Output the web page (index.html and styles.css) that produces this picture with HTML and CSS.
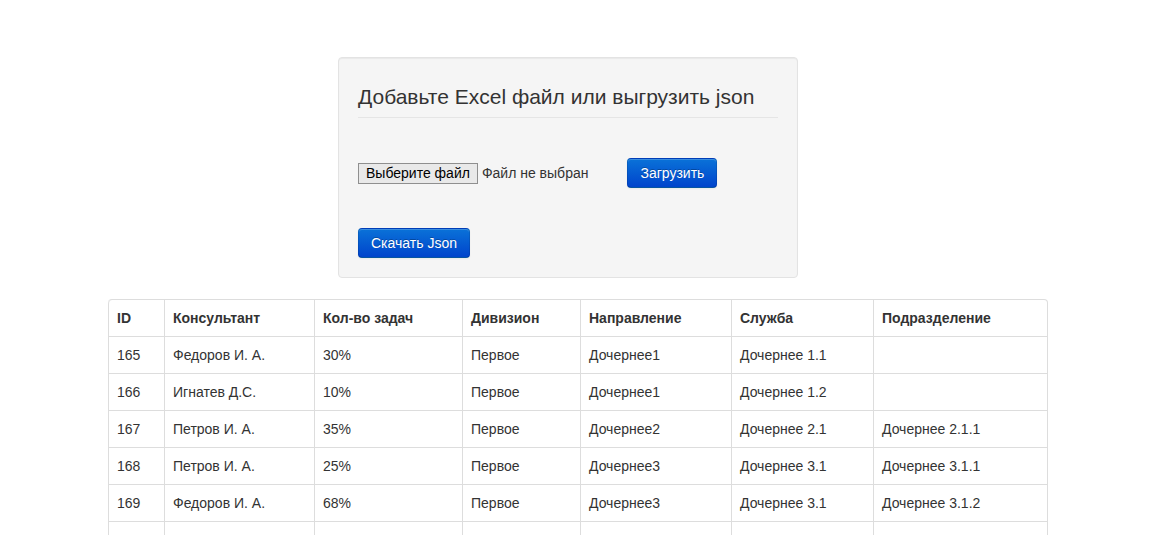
FILE: index.html
```html
<!DOCTYPE html>
<html lang="ru">
<head>
<meta charset="utf-8">
<title>Excel</title>
<link rel="stylesheet" href="styles.css">
</head>
<body>
<div class="page">
  <div class="well">
    <div class="legend">Добавьте Excel файл или выгрузить json</div>
    <div class="upload-row">
      <span class="file-btn">Выберите файл</span>
      <span class="file-name">Файл не выбран</span>
      <button class="btn btn-primary upload">Загрузить</button>
    </div>
    <div class="download-row">
      <button class="btn btn-primary">Скачать Json</button>
    </div>
  </div>

  <table class="table">
    <colgroup>
      <col class="c1"><col class="c2"><col class="c3"><col class="c4"><col class="c5"><col class="c6"><col class="c7">
    </colgroup>
    <thead>
      <tr><th>ID</th><th>Консультант</th><th>Кол-во задач</th><th>Дивизион</th><th>Направление</th><th>Служба</th><th>Подразделение</th></tr>
    </thead>
    <tbody>
      <tr><td>165</td><td>Федоров И. А.</td><td>30%</td><td>Первое</td><td>Дочернее1</td><td>Дочернее 1.1</td><td></td></tr>
      <tr><td>166</td><td>Игнатев Д.С.</td><td>10%</td><td>Первое</td><td>Дочернее1</td><td>Дочернее 1.2</td><td></td></tr>
      <tr><td>167</td><td>Петров И. А.</td><td>35%</td><td>Первое</td><td>Дочернее2</td><td>Дочернее 2.1</td><td>Дочернее 2.1.1</td></tr>
      <tr><td>168</td><td>Петров И. А.</td><td>25%</td><td>Первое</td><td>Дочернее3</td><td>Дочернее 3.1</td><td>Дочернее 3.1.1</td></tr>
      <tr><td>169</td><td>Федоров И. А.</td><td>68%</td><td>Первое</td><td>Дочернее3</td><td>Дочернее 3.1</td><td>Дочернее 3.1.2</td></tr>
      <tr><td>&nbsp;</td><td>&nbsp;</td><td>&nbsp;</td><td>&nbsp;</td><td>&nbsp;</td><td>&nbsp;</td><td>&nbsp;</td></tr>
    </tbody>
  </table>
</div>
</body>
</html>
```
FILE: styles.css
```css
html, body {
  margin: 0;
  padding: 0;
  background: #ffffff;
}
body {
  font-family: "Liberation Sans", Arial, Helvetica, sans-serif;
  font-size: 14px;
  line-height: 20px;
  color: #333333;
}
.page {
  padding-top: 57px;
}
.well {
  box-sizing: border-box;
  width: 460px;
  margin-left: 338px;
  padding: 19px;
  background-color: #f5f5f5;
  border: 1px solid #e3e3e3;
  border-radius: 4px;
  box-shadow: inset 0 1px 1px rgba(0, 0, 0, 0.05);
}
.legend {
  font-size: 21px;
  line-height: 40px;
  color: #333333;
  border-bottom: 1px solid #e5e5e5;
}
.upload-row {
  display: flex;
  align-items: center;
  margin-top: 40px;
  height: 30px;
}
.file-btn {
  box-sizing: border-box;
  height: 21px;
  line-height: 19px;
  padding: 0 7px;
  font-size: 14px;
  color: #000000;
  background: #e9e9e9;
  border: 1px solid #8f8f8f;
  border-radius: 0;
}
.file-name {
  margin-left: 4px;
  font-size: 14px;
  color: #333333;
}
.upload {
  margin-left: 39px;
}
.download-row {
  margin-top: 40px;
  display: flex;
}
.btn {
  box-sizing: border-box;
  height: 30px;
  padding: 4px 12px;
  font-family: "Liberation Sans", Arial, Helvetica, sans-serif;
  font-size: 14px;
  line-height: 20px;
  border-radius: 4px;
  cursor: pointer;
}
.btn-primary {
  color: #ffffff;
  text-shadow: 0 -1px 0 rgba(0, 0, 0, 0.25);
  background-color: #0058d0;
  background-image: linear-gradient(to bottom, #0a72d8, #0044cc);
  border: 1px solid rgba(0, 0, 0, 0.1);
  border-bottom-color: rgba(0, 0, 0, 0.25);
  box-shadow: inset 0 1px 0 rgba(255, 255, 255, 0.2), 0 1px 2px rgba(0, 0, 0, 0.05);
}
.table {
  table-layout: fixed;
  width: 940px;
  margin-left: 108px;
  margin-top: 21px;
  border-collapse: separate;
  border-spacing: 0;
  border: 1px solid #dddddd;
  border-left: 0;
  border-radius: 4px;
}
.c1 { width: 56px; }
.c2 { width: 150px; }
.c3 { width: 148px; }
.c4 { width: 118px; }
.c5 { width: 151px; }
.c6 { width: 142px; }
.c7 { width: 174px; }
.table th,
.table td {
  padding: 8px;
  line-height: 20px;
  text-align: left;
  vertical-align: top;
  border-left: 1px solid #dddddd;
  border-top: 1px solid #dddddd;
  white-space: nowrap;
  overflow: hidden;
}
.table thead th {
  border-top: 0;
  font-weight: bold;
}
.table thead th:first-child {
  border-top-left-radius: 4px;
}
.table thead th:last-child {
  border-top-right-radius: 4px;
}
```
